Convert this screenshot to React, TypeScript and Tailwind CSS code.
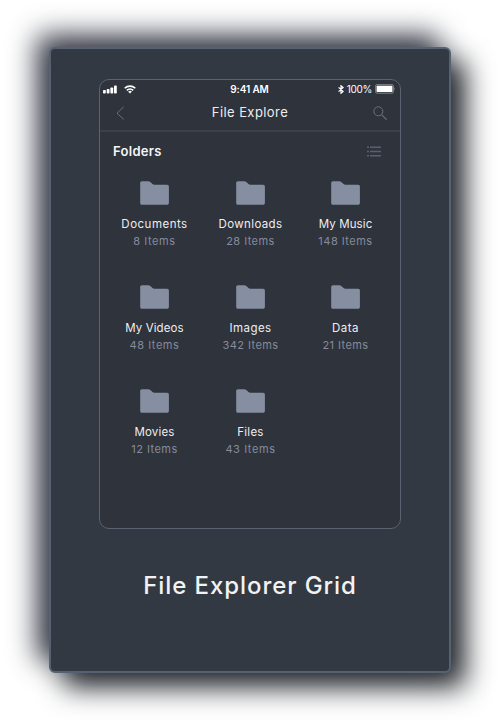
import React from "react";

type Folder = { name: string; items: string; nameClass: string; itemsClass: string };

const folders: Folder[] = [
  { name: "Documents", items: "8 Items", nameClass: "tracking-[0.490px]", itemsClass: "tracking-[0.58px]" },
  { name: "Downloads", items: "28 Items", nameClass: "tracking-[0.38px]", itemsClass: "tracking-[0.44px]" },
  { name: "My Music", items: "148 Items", nameClass: "tracking-[0.12px]", itemsClass: "tracking-[0.48px]" },
  { name: "My Videos", items: "48 Items", nameClass: "tracking-[0.1px]", itemsClass: "tracking-[0.54px]" },
  { name: "Images", items: "342 Items", nameClass: "tracking-[0.450px]", itemsClass: "tracking-[0.44px]" },
  { name: "Data", items: "21 Items", nameClass: "tracking-[0.550px]", itemsClass: "tracking-[0.42px]" },
  { name: "Movies", items: "12 Items", nameClass: "tracking-[0.16px]", itemsClass: "tracking-[0.46px]" },
  { name: "Files", items: "43 Items", nameClass: "tracking-[0.250px]", itemsClass: "tracking-[0.58px]" },
];

function FolderIcon() {
  return (
    <svg width="29" height="24" viewBox="0 0 29 24" className="block">
      <path
        d="M2 .3h6.200c.9 0 1.500.2 2.100.8l2.200 1.900c.6.5 1 .7 1.900.7H27c1.200 0 1.900.7 1.900 1.900V22c0 1.100-.7 1.800-1.900 1.800H2C.8 23.800.2 23.100.2 22V2.200C.2 1 .8.3 2 .3z"
        fill="#868fa2"
      />
    </svg>
  );
}

function StatusBar() {
  return (
    <div className="flex h-[18px] items-center pr-[4px] pl-[3px] text-white">
      <div className="flex flex-1 items-center gap-[7px]">
        <svg width="14" height="9" viewBox="0 0 14 9" fill="#fff">
          <rect x="0" y="5" width="2.800" height="3.500" rx=".8" />
          <rect x="3.700" y="4" width="2.800" height="4.500" rx=".8" />
          <rect x="7.400" y="2.500" width="2.800" height="6" rx=".8" />
          <rect x="11" y=".5" width="2.800" height="8" rx=".8" />
        </svg>
        <svg width="12" height="9" viewBox="0 0 12 9" fill="none" stroke="#fff">
          <path d="M.7 3.300a7.600 7.600 0 0 1 10.600 0" strokeWidth="1.600" />
          <path d="M2.800 5.400a4.600 4.600 0 0 1 6.400 0" strokeWidth="1.500" />
          <path d="M4.200 6.700a2.600 2.600 0 0 1 3.600 0L6 8.600z" fill="#fff" stroke="none" />
        </svg>
      </div>
      <span className="text-[10px] leading-none font-semibold tracking-[-0.1px]">9:41 AM</span>
      <div className="flex flex-1 items-center justify-end">
        <svg width="6" height="9" viewBox="0 0 6 9" fill="none" stroke="#fff" strokeWidth="1.200">
          <path d="M.6 2.400 5.200 6.500 3 8.300V.7l2.200 1.800L.6 6.600" />
        </svg>
        <span className="ml-[3px] text-[10px] leading-none tracking-[-0.3px]">100%</span>
        <svg width="21" height="10" viewBox="0 0 21 10" className="ml-[3px]">
          <rect x=".5" y=".5" width="18" height="8.800" rx="1.500" fill="#3c4149" stroke="#747980" />
          <rect x="1.600" y="1.700" width="15.800" height="6.400" rx=".4" fill="#fff" />
          <path d="M19.500 3.300q1.200 1.600 0 3.200z" fill="#9297a0" />
        </svg>
      </div>
    </div>
  );
}

export default function App() {
  return (
    <div className="flex h-[720px] w-[500px] flex-col bg-white pt-[47px] pl-[49px] font-['Inter','Liberation_Sans',sans-serif]">
      <div className="flex h-[626px] w-[402px] flex-col items-center rounded-[6px] border-2 border-[#566172] bg-[#333943] pt-[30px] shadow-[-12px_-12px_28px_#363a47,14px_14px_28px_#1f2428]">
        <div className="flex h-[450px] w-[302px] shrink-0 flex-col rounded-[10px] border border-[#596372] bg-[#2f333c]">
          <StatusBar />
          <div className="flex h-[34px] items-center justify-between border-b-2 border-[#3b404b] pr-[13px] pb-[3px] pl-[16px]">
            <svg width="9" height="14" viewBox="0 0 9 14" fill="none" stroke="#697080">
              <path d="M7.700.8 1 7.200l6.700 6.200" />
            </svg>
            <span className="ml-[2px] text-[13px] leading-none tracking-[0.420px] text-[#eceef0]">File Explore</span>
            <svg width="14" height="14" viewBox="0 0 14 14" fill="none" stroke="#697080">
              <circle cx="5.300" cy="5.300" r="4.500" />
              <path d="m8.600 8.600 5 5" strokeWidth="1.200" />
            </svg>
          </div>
          <div className="flex h-[38px] items-center justify-between pr-[19px] pl-[13px]">
            <span className="text-[13px] leading-none font-semibold tracking-[0.3px] text-[#f4f5f5]">Folders</span>
            <svg width="14" height="11" viewBox="0 0 14 11" fill="#596070">
              <path d="M0 .5h2V2H0zM3 .5h11V2H3zM0 4.700h2v1.500H0zM3 4.700h11v1.500H3zM0 8.900h2v1.500H0zM3 8.900h11v1.500H3z" />
            </svg>
          </div>
          <div className="grid grid-cols-[95px_97px_93px] px-[7px] pt-[11px]">
            {folders.map((f) => (
              <div key={f.name} className="flex h-[104px] flex-col items-center whitespace-nowrap">
                <FolderIcon />
                <span className={`mt-[11px] text-[11.500px] leading-[17px] text-[#edeeef] ${f.nameClass}`}>{f.name}</span>
                <span className={`text-[11px] leading-[16px] text-[#858b9b] ${f.itemsClass}`}>{f.items}</span>
              </div>
            ))}
          </div>
        </div>
        <h1 className="mt-[41px] text-[24px] leading-[32px] font-medium tracking-[0.920px] text-[#f1f3f3]">File Explorer Grid</h1>
      </div>
    </div>
  );
}
